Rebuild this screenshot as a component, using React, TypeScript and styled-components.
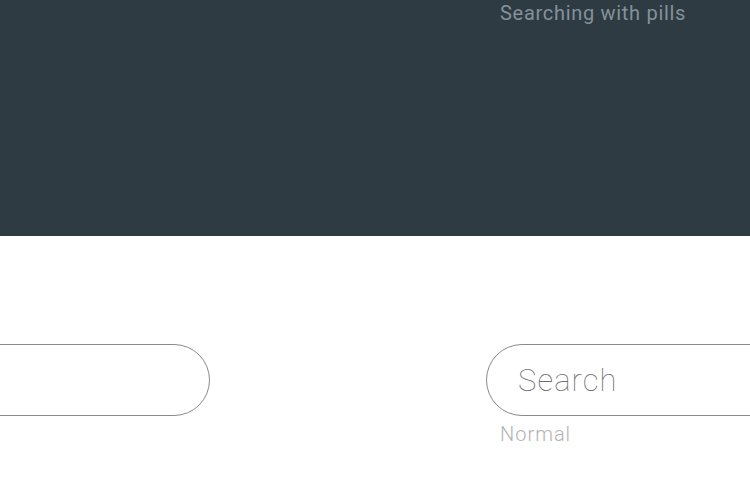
import * as React from 'react';
import styled, { createGlobalStyle } from 'styled-components';

const Global = createGlobalStyle`
  html, body {
    margin: 0;
    padding: 0;
    background: #ffffff;
    overflow: hidden;
  }
  body {
    font-family: Roboto, "Liberation Sans", sans-serif;
  }
`;

const Header = styled.header`
  height: 236px;
  background: #2e3b43;
  overflow: hidden;
`;

const Row = styled.div`
  display: flex;
  gap: 276px;
  margin-left: -190px;
`;

const Column = styled.div`
  flex: 0 0 400px;
  display: flex;
  flex-direction: column;
`;

const Title = styled.h1`
  margin: 0;
  padding-left: 14px;
  font-size: 20px;
  line-height: 26px;
  font-weight: 400;
  letter-spacing: 0.7px;
  color: #85919a;
`;

const Stage = styled.section`
  padding-top: 108px;
`;

const Pill = styled.input`
  box-sizing: border-box;
  width: 400px;
  height: 72px;
  margin: 0;
  padding: 0 30px 0 31px;
  border: 1px solid #8a8a8a;
  border-radius: 36px;
  background: #fff;
  outline: none;
  font-family: Roboto, "Liberation Sans", sans-serif;
  font-size: 31px;
  font-weight: 100;
  letter-spacing: 1.1px;
  color: #555;

  &::placeholder {
    color: #6e6e6e;
  }
`;

const Caption = styled.span`
  padding-left: 14px;
  margin-top: 6px;
  font-size: 20px;
  line-height: 24px;
  font-weight: 300;
  letter-spacing: 1px;
  color: #b3b3b3;
`;

const variants = [
  { key: 'plain', placeholder: '', caption: '' },
  { key: 'normal', placeholder: 'Search', caption: 'Normal' },
];

export default function App() {
  return (
    <>
      <Global />
      <Header>
        <Row>
          <Column />
          <Column>
            <Title>Searching with pills</Title>
          </Column>
        </Row>
      </Header>
      <Stage>
        <Row>
          {variants.map(v => (
            <Column key={v.key}>
              <Pill placeholder={v.placeholder} readOnly />
              {v.caption && <Caption>{v.caption}</Caption>}
            </Column>
          ))}
        </Row>
      </Stage>
    </>
  );
}
